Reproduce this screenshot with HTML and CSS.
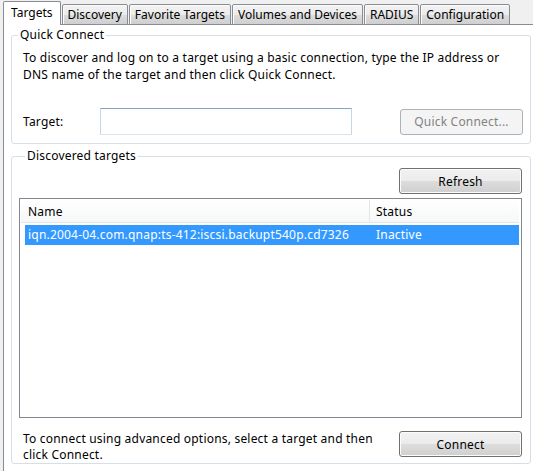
FILE: index.html
```html
<!DOCTYPE html>
<html lang="en">

<head>
    <meta charset="UTF-8">
    <meta name="viewport" content="width=device-width, initial-scale=1.0">
    <title>iSCSI Initiator Properties</title>
    <link rel="stylesheet" href="styles.css">
</head>

<body>
    <div class="dialog">
        <!-- tab strip -->
        <div class="tabs">
            <div class="tab active">Targets</div>
            <div class="tab">Discovery</div>
            <div class="tab">Favorite Targets</div>
            <div class="tab">Volumes and Devices</div>
            <div class="tab">RADIUS</div>
            <div class="tab">Configuration</div>
        </div>

        <div class="panel">
            <!-- quick connect group -->
            <fieldset class="group quick">
                <legend>Quick Connect</legend>
                <p class="intro">To discover and log on to a target using a basic connection, type the IP address or<br>DNS name of the target and then click Quick Connect.</p>
                <div class="target-row">
                    <label for="target" class="target-label">Target:</label>
                    <input type="text" id="target" class="textbox">
                    <button class="btn" disabled>Quick Connect...</button>
                </div>
            </fieldset>

            <!-- discovered targets group -->
            <fieldset class="group discovered">
                <legend>Discovered targets</legend>
                <div class="refresh-row">
                    <button class="btn">Refresh</button>
                </div>
                <div class="list">
                    <div class="list-head">
                        <div class="col-name">Name</div>
                        <div class="col-status">Status</div>
                    </div>
                    <div class="list-row selected">
                        <div class="cell-name">iqn.2004-04.com.qnap:ts-412:iscsi.backupt540p.cd7326</div>
                        <div class="cell-status">Inactive</div>
                    </div>
                </div>
                <div class="connect-row">
                    <p class="hint">To connect using advanced options, select a target and then<br>click Connect.</p>
                    <button class="btn">Connect</button>
                </div>
            </fieldset>
        </div>
    </div>
</body>

</html>
```

FILE: styles.css
```css
/* page base */
body {
    margin: 0;
    background-color: #f0f0f0;
    font-family: "Noto Sans", "Open Sans", sans-serif;
    font-size: 12px;
    letter-spacing: 0.2px;
    color: #000;
    overflow: hidden;
}

.dialog {
    padding: 1px 0 0 3px;
}

/* tab strip */
.tabs {
    display: flex;
    align-items: flex-end;
    gap: 1px;
    height: 24px;
    margin-bottom: -1px;
    position: relative;
    z-index: 1;
    letter-spacing: 0;
}

.tab {
    box-sizing: border-box;
    height: 21px;
    line-height: 19px;
    padding: 0 5px;
    border: 1px solid #898c95;
    border-radius: 2px 2px 0 0;
    background: linear-gradient(#f3f3f3, #ebebeb 50%, #dddddd 51%, #cfcfcf);
    box-shadow: inset 1px 1px 0 #fcfcfc;
}

.tab.active {
    height: 24px;
    line-height: 22px;
    padding: 0 7px;
    border-bottom: none;
    background: #fff;
    box-shadow: none;
}

/* white page of the tab control */
.panel {
    box-sizing: border-box;
    height: 470px;
    padding: 0 2px 0 7px;
    background: #fff;
    border: 1px solid #898c95;
    border-right: none;
}

/* group boxes */
.group {
    margin: 2px 0 0;
    padding: 0;
    border: 1px solid #d5dfe5;
    border-radius: 3px;
    box-shadow: inset 1px 1px 0 #fff;
}

.group legend {
    margin-left: 6px;
    padding: 0 2px;
    line-height: 16px;
}

.discovered {
    margin-top: 4px;
    padding: 0 8px 0 7px;
}

.intro {
    margin: 6px 0 0 11px;
    line-height: 17px;
}

.target-row {
    display: flex;
    align-items: center;
    margin: 25px 0 8px 11px;
    padding-right: 7px;
}

.target-label {
    width: 77px;
}

.textbox {
    box-sizing: border-box;
    width: 252px;
    height: 27px;
    margin: 0;
    border: 1px solid #c7d6e5;
    border-top-color: #86a5c5;
    border-bottom-color: #dde5ee;
    outline: none;
}

/* buttons */
.btn {
    box-sizing: border-box;
    width: 123px;
    height: 26px;
    margin-left: auto;
    padding: 0;
    font-family: inherit;
    font-size: inherit;
    letter-spacing: inherit;
    color: #000;
    border: 1px solid #707070;
    border-radius: 3px;
    background: linear-gradient(#f2f2f2, #ebebeb 50%, #dddddd 51%, #cfcfcf);
    box-shadow: inset 0 0 0 1px #fcfcfc;
}

.btn:disabled {
    color: #838383;
    border-color: #adb2b5;
    background: #f4f4f4;
    box-shadow: none;
}

.refresh-row {
    display: flex;
    margin-top: 4px;
}

/* list view */
.list {
    box-sizing: border-box;
    height: 220px;
    margin-top: 4px;
    padding: 1px 2px 1px 1px;
    border: 1px solid #828790;
    background: #fff;
}

.list-head {
    display: flex;
    height: 23px;
    padding-top: 2px;
    line-height: 20px;
    background: linear-gradient(#ffffff, #f6f7f8);
    border-bottom: 1px solid #e5e5e5;
    box-sizing: border-box;
}

.col-name {
    width: 349px;
    padding-left: 7px;
    box-sizing: border-box;
    border-right: 1px solid #e3e5e7;
    margin-top: -2px;
    padding-top: 2px;
}

.col-status {
    padding-left: 6px;
}

.list-row {
    display: flex;
    height: 20px;
    line-height: 20px;
    margin: 2px 0 0 4px;
}

.list-row.selected {
    background: #3399ff;
    color: #fff;
}

.cell-name {
    width: 348px;
    padding-left: 3px;
    box-sizing: border-box;
}

.cell-status {
    padding-left: 3px;
}

.connect-row {
    display: flex;
    align-items: flex-start;
    margin-top: 13px;
}

.hint {
    margin: 0 0 0 4px;
    line-height: 16px;
}
```
